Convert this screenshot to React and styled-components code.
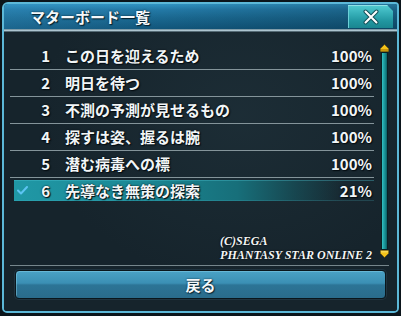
import React from 'react';
import styled, { createGlobalStyle, css } from 'styled-components';

const Global = createGlobalStyle`
  html, body { margin: 0; padding: 0; background: #0b151b; }
  body { font-family: "Noto Sans CJK JP", "Noto Sans", sans-serif; }
  * { box-sizing: border-box; }
`;

const Screen = styled.div`
  width: 401px;
  height: 316px;
  padding: 2px 2px 3px 2px;
  background: #0b151b;
`;

const Window = styled.div`
  height: 100%;
  display: flex;
  flex-direction: column;
  border: 2px solid #5cb8d8;
  border-radius: 6px 4px 5px 5px;
  box-shadow: inset 0 0 0 1px #0d2632;
  background: #16242c;
  overflow: hidden;
`;

const TitleBar = styled.div`
  height: 25px;
  flex: none;
  display: flex;
  align-items: center;
  padding: 0 4px 0 26px;
  background:
    linear-gradient(90deg, rgba(60, 150, 200, 0.25) 0%, rgba(0, 0, 0, 0) 40%, rgba(0, 20, 30, 0.25) 100%),
    linear-gradient(180deg, #3193c2 0%, #2379a6 22%, #1a6890 55%, #11557a 100%);
`;

const Title = styled.h1`
  margin: 0;
  font-size: 15px;
  font-weight: 700;
  color: #f4f8fa;
  letter-spacing: 0;
  text-shadow: 0 0 2px #07202e, 1px 1px 1px #06202c;
`;

const CloseButton = styled.button`
  margin-left: auto;
  width: 45px;
  height: 23px;
  padding: 0;
  border: none;
  display: flex;
  align-items: center;
  justify-content: center;
  background: linear-gradient(180deg, #52ccd2 0%, #34adb6 40%, #2196a0 70%, #1a8690 100%);
  box-shadow: inset 0 1px 0 #8fe2e8, inset 1px 0 0 #6cd0d8;
  clip-path: polygon(0 0, calc(100% - 6px) 0, 100% 6px, 100% 100%, 0 100%);
  cursor: pointer;
`;

const TitleRule = styled.div`
  height: 3px;
  flex: none;
  background: linear-gradient(180deg, #5e7e8c 0%, #b8d0da 45%, #7e98a4 70%, #24343c 100%);
`;

const Body = styled.div`
  flex: 1;
  display: flex;
  flex-direction: column;
  padding: 11px 8px 0 6px;
  background:
    radial-gradient(ellipse at 60% 30%, rgba(40, 62, 72, 0.35) 0%, rgba(0, 0, 0, 0) 60%),
    #16242c;
`;

const ListArea = styled.div`
  height: 216px;
  flex: none;
  display: flex;
  gap: 6px;
`;

const List = styled.div`
  flex: 1;
  display: flex;
  flex-direction: column;
`;

const Row = styled.div`
  height: 27px;
  flex: none;
  padding: 2px 0 3px 4px;
  border-bottom: 1px solid ${p => (p.$last ? 'transparent' : '#84949a')};
`;

const RowInner = styled.div`
  height: 100%;
  display: flex;
  align-items: center;
  font-size: 15px;
  font-weight: 700;
  color: #f2f6f7;
  text-shadow: 0 0 2px #050d12, 1px 1px 1px #050d12;
  ${p =>
    p.$active &&
    css`
      background: linear-gradient(
        90deg,
        #2098a6 0%,
        #1b8894 35%,
        #176f7a 62%,
        rgba(22, 90, 100, 0.6) 78%,
        rgba(22, 36, 44, 0) 92%
      );
      box-shadow: inset 0 1px 0 rgba(80, 200, 215, 0.35), inset 0 -1px 0 rgba(80, 200, 215, 0.2);
    `}
`;

const CheckCell = styled.div`
  width: 18px;
  padding-left: 3px;
  display: flex;
  align-items: center;
`;

const Num = styled.span`
  width: 18px;
  text-align: right;
`;

const Name = styled.span`
  flex: 1;
  margin-left: 15px;
  white-space: nowrap;
`;

const Pct = styled.span`
  padding-right: 2px;
`;

const Credits = styled.div`
  margin-top: auto;
  margin-bottom: -3px;
  align-self: flex-end;
  padding-right: 2px;
  font-family: "Liberation Serif", "Times New Roman", serif;
  font-style: italic;
  font-weight: 700;
  font-size: 12px;
  line-height: 14px;
  color: #f4f6f6;
  text-shadow: 0 0 2px #000;
`;

const ScrollBar = styled.div`
  width: 9px;
  flex: none;
  display: flex;
  flex-direction: column;
  align-items: center;
  padding: 1px 0;
`;

const Track = styled.div`
  flex: 1;
  width: 7px;
  border: 1px solid #0a2024;
  background: linear-gradient(90deg, #36c2c4 0%, #1fa2a6 35%, #178a8e 65%, #0d5e64 100%);
`;

const Rule = styled.div`
  height: 1px;
  flex: none;
  margin-top: 6px;
  background: #76868c;
`;

const BackButton = styled.button`
  height: 29px;
  flex: none;
  margin: 4px 3px 0 5px;
  border: 1px solid #0a161c;
  border-radius: 4px;
  background: linear-gradient(180deg, #4aa2c6 0%, #3b8fb4 45%, #2c7496 52%, #2a6c8c 100%);
  box-shadow: inset 1px 1px 0 rgba(140, 210, 235, 0.45), 0 0 0 1px #203440;
  font-family: "Noto Sans CJK JP", "Noto Sans", sans-serif;
  font-size: 15px;
  font-weight: 700;
  color: #f4f8fa;
  text-shadow: 0 0 2px #0a2838, 1px 1px 1px #0a2838;
  cursor: pointer;
`;

const Check = () => (
  <svg width="11" height="9" viewBox="0 0 11 9">
    <path d="M1 4.5 L4 7.5 L10 1" fill="none" stroke="#5cc4f2" strokeWidth="2" strokeLinecap="round" strokeLinejoin="round" />
  </svg>
);

const CloseIcon = () => (
  <svg width="16" height="16" viewBox="0 0 16 16">
    <path d="M2.5 2.5 L13.5 13.5 M13.5 2.5 L2.5 13.5" stroke="#14525a" strokeWidth="4" strokeLinecap="round" />
    <path d="M2.5 2.5 L13.5 13.5 M13.5 2.5 L2.5 13.5" stroke="#ffffff" strokeWidth="2" strokeLinecap="round" />
  </svg>
);

const ArrowUp = () => (
  <svg width="9" height="8" viewBox="0 0 9 8">
    <path d="M4.5 0.5 L8.5 4.5 L8.5 7.5 L0.5 7.5 L0.5 4.5 Z" fill="#f2c21a" stroke="#6a5008" strokeWidth="0.6" />
    <path d="M0.8 5 L8.2 5 L8.2 7.2 L0.8 7.2 Z" fill="#c8960e" />
  </svg>
);

const ArrowDown = () => (
  <svg width="9" height="8" viewBox="0 0 9 8">
    <path d="M0.5 0.5 L8.5 0.5 L8.5 3.5 L4.5 7.5 L0.5 3.5 Z" fill="#f2c21a" stroke="#6a5008" strokeWidth="0.6" />
    <path d="M0.8 0.8 L8.2 0.8 L8.2 2.6 L0.8 2.6 Z" fill="#f8d850" />
  </svg>
);

const boards = [
  { no: 1, name: 'この日を迎えるため', pct: '100%' },
  { no: 2, name: '明日を待つ', pct: '100%' },
  { no: 3, name: '不測の予測が見せるもの', pct: '100%' },
  { no: 4, name: '探すは姿、握るは腕', pct: '100%' },
  { no: 5, name: '潜む病毒への標', pct: '100%' },
  { no: 6, name: '先導なき無策の探索', pct: '21%', active: true },
];

export default function App() {
  return (
    <>
      <Global />
      <Screen>
        <Window>
          <TitleBar>
            <Title>マターボード一覧</Title>
            <CloseButton aria-label="close">
              <CloseIcon />
            </CloseButton>
          </TitleBar>
          <TitleRule />
          <Body>
            <ListArea>
              <List>
                {boards.map((b, i) => (
                  <Row key={b.no} $last={i === boards.length - 1}>
                    <RowInner $active={b.active}>
                      <CheckCell>{b.active && <Check />}</CheckCell>
                      <Num>{b.no}</Num>
                      <Name>{b.name}</Name>
                      <Pct>{b.pct}</Pct>
                    </RowInner>
                  </Row>
                ))}
                <Credits>
                  (C)SEGA
                  <br />
                  PHANTASY STAR ONLINE 2
                </Credits>
              </List>
              <ScrollBar>
                <ArrowUp />
                <Track />
                <ArrowDown />
              </ScrollBar>
            </ListArea>
            <Rule />
            <BackButton>戻る</BackButton>
          </Body>
        </Window>
      </Screen>
    </>
  );
}
